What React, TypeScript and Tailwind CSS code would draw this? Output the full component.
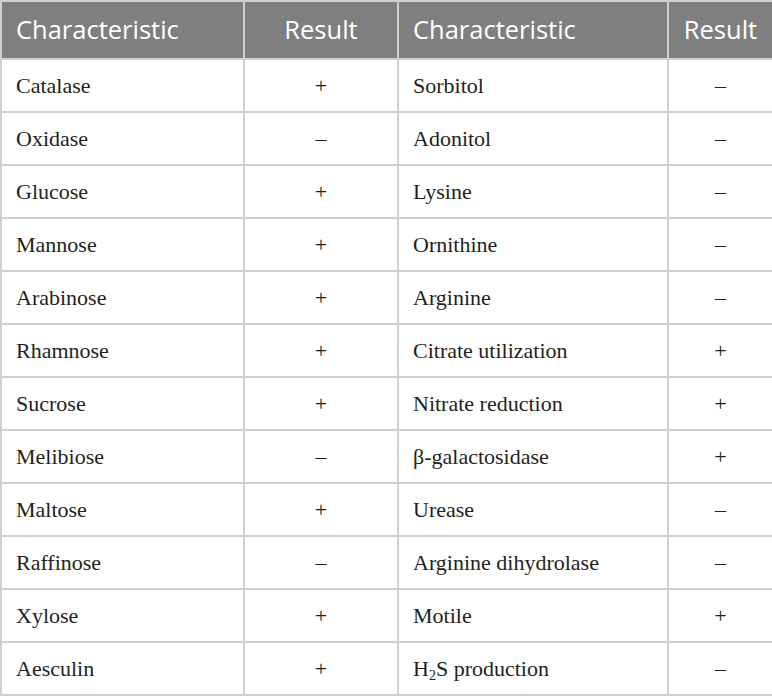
const rows: [string, string, React.ReactNode, string][] = [
  ['Catalase', '+', 'Sorbitol', '–'],
  ['Oxidase', '–', 'Adonitol', '–'],
  ['Glucose', '+', 'Lysine', '–'],
  ['Mannose', '+', 'Ornithine', '–'],
  ['Arabinose', '+', 'Arginine', '–'],
  ['Rhamnose', '+', 'Citrate utilization', '+'],
  ['Sucrose', '+', 'Nitrate reduction', '+'],
  ['Melibiose', '–', 'β-galactosidase', '+'],
  ['Maltose', '+', 'Urease', '–'],
  ['Raffinose', '–', 'Arginine dihydrolase', '–'],
  ['Xylose', '+', 'Motile', '+'],
  [
    'Aesculin',
    '+',
    <>
      H<sub className="text-[14px] align-baseline relative top-[4px]">2</sub>S production
    </>,
    '–',
  ],
];

export default function App() {
  return (
    <div className="w-[772px] h-[696px] bg-white">
      <table className="w-[772px] table-fixed border-collapse border-2 border-[#cfcfcf]">
        <colgroup>
          <col className="w-[243px]" />
          <col className="w-[154px]" />
          <col className="w-[270px]" />
          <col className="w-[105px]" />
        </colgroup>
        <thead>
          <tr className="h-[58px] bg-[#7f7f7f] text-white text-[25.5px] font-['Open_Sans',sans-serif]">
            <th className="text-left font-normal pl-[14px] border-2 border-[#cfcfcf] pb-[2px]">Characteristic</th>
            <th className="text-center font-normal border-2 border-[#cfcfcf] pb-[2px]">Result</th>
            <th className="text-left font-normal pl-[14px] border-2 border-[#cfcfcf] pb-[2px]">Characteristic</th>
            <th className="text-center font-normal border-2 border-[#cfcfcf] pb-[2px]">Result</th>
          </tr>
        </thead>
        <tbody className="text-[22px] text-[#231f20] font-['Liberation_Serif',serif]">
          {rows.map((r, i) => (
            <tr key={i} className="h-[53px]">
              <td className="pl-[14px] border-2 border-[#cfcfcf]">{r[0]}</td>
              <td className="text-center border-2 border-[#cfcfcf]">{r[1]}</td>
              <td className="pl-[14px] border-2 border-[#cfcfcf]">{r[2]}</td>
              <td className="text-center border-2 border-[#cfcfcf]">{r[3]}</td>
            </tr>
          ))}
        </tbody>
      </table>
    </div>
  );
}
